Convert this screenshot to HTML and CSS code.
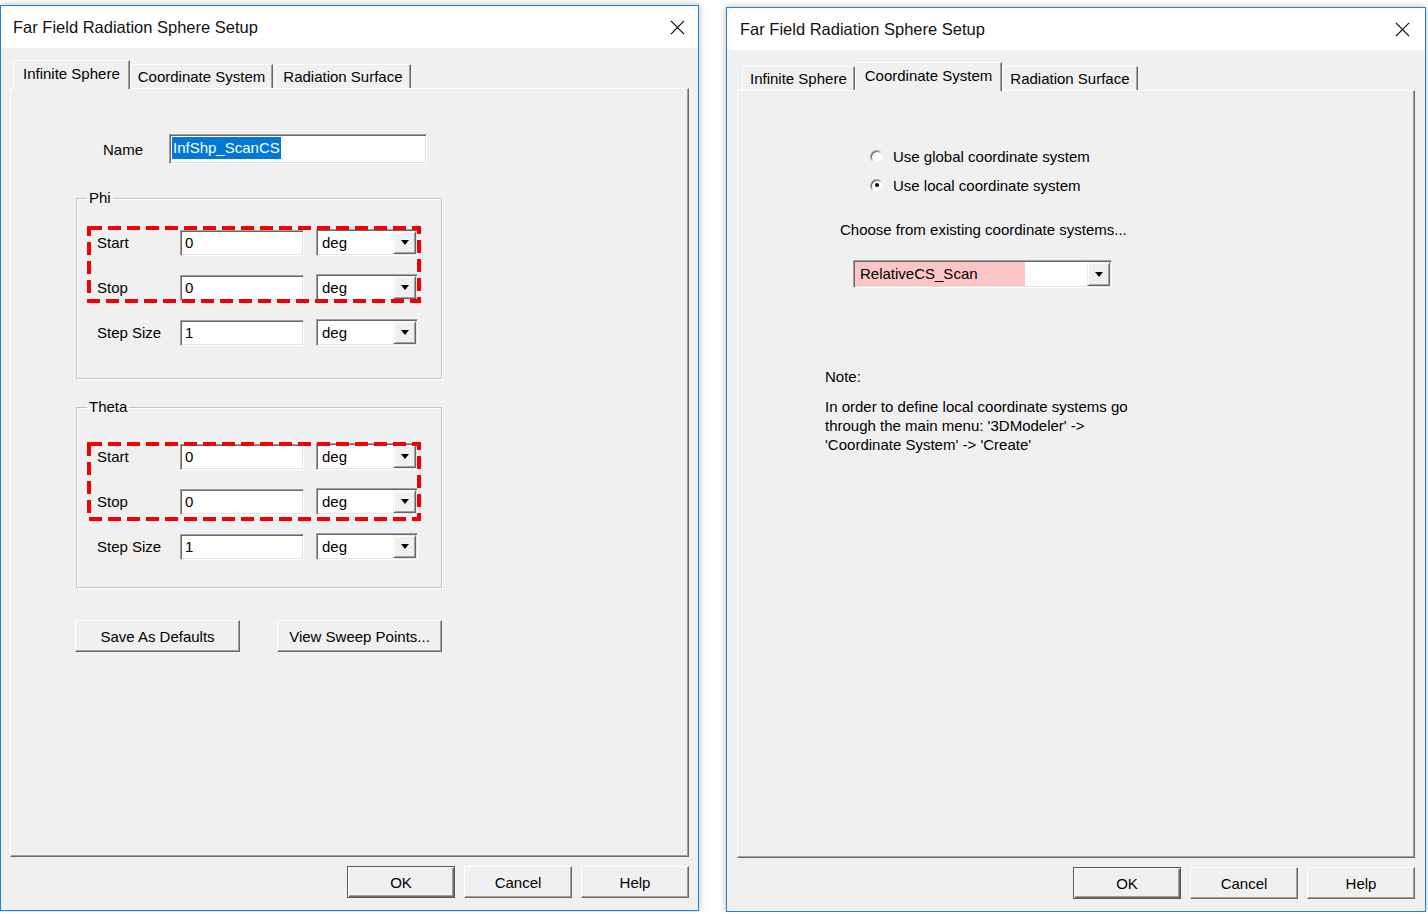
FILE: index.html
```html
<!DOCTYPE html>
<html lang="en">
<head>
  <meta charset="UTF-8">
  <title>Far Field Radiation Sphere Setup</title>
  <link rel="stylesheet" href="styles.css">
</head>
<body>

  <!-- left: infinite sphere tab -->
  <div class="dialog">
    <div class="titlebar">
      <span class="title">Far Field Radiation Sphere Setup</span>
      <svg class="close" viewBox="0 0 16 16"><path d="M1 1L15 15M15 1L1 15" stroke="#000" stroke-width="1.2" fill="none"/></svg>
    </div>
    <div class="dlg-body">
      <div class="tabs">
        <div class="tab active">Infinite Sphere</div>
        <div class="tab">Coordinate System</div>
        <div class="tab">Radiation Surface</div>
      </div>
      <div class="panel panel-sphere">
        <div class="name-row">
          <span class="name-lbl">Name</span>
          <div class="field name-field"><span class="sel">InfShp_ScanCS</span></div>
        </div>

        <fieldset class="group group-phi">
          <legend>Phi</legend>
          <div class="rows">
            <svg class="mark" width="334" height="77"><rect x="2" y="2" width="330" height="73" fill="none" stroke="#f40000" stroke-width="4" stroke-dasharray="13 6"/></svg>
            <div class="row">
              <span>Start</span>
              <div class="field">0</div>
              <div class="combo"><span class="combo-text">deg</span><span class="drop"></span></div>
            </div>
            <div class="row">
              <span>Stop</span>
              <div class="field">0</div>
              <div class="combo"><span class="combo-text">deg</span><span class="drop"></span></div>
            </div>
            <div class="row">
              <span>Step Size</span>
              <div class="field">1</div>
              <div class="combo"><span class="combo-text">deg</span><span class="drop"></span></div>
            </div>
          </div>
        </fieldset>

        <fieldset class="group group-theta">
          <legend>Theta</legend>
          <div class="rows">
            <svg class="mark mark-theta" width="334" height="79"><rect x="2" y="2" width="330" height="75" fill="none" stroke="#f40000" stroke-width="4" stroke-dasharray="13 6"/></svg>
            <div class="row">
              <span>Start</span>
              <div class="field">0</div>
              <div class="combo"><span class="combo-text">deg</span><span class="drop"></span></div>
            </div>
            <div class="row">
              <span>Stop</span>
              <div class="field">0</div>
              <div class="combo"><span class="combo-text">deg</span><span class="drop"></span></div>
            </div>
            <div class="row">
              <span>Step Size</span>
              <div class="field">1</div>
              <div class="combo"><span class="combo-text">deg</span><span class="drop"></span></div>
            </div>
          </div>
        </fieldset>

        <div class="extra-btns">
          <button class="btn wide">Save As Defaults</button>
          <button class="btn wide">View Sweep Points...</button>
        </div>
      </div>
      <div class="footer-btns">
        <button class="btn default">OK</button>
        <button class="btn">Cancel</button>
        <button class="btn">Help</button>
      </div>
    </div>
  </div>

  <!-- right: coordinate system tab -->
  <div class="dialog">
    <div class="titlebar">
      <span class="title">Far Field Radiation Sphere Setup</span>
      <svg class="close" viewBox="0 0 16 16"><path d="M1 1L15 15M15 1L1 15" stroke="#000" stroke-width="1.2" fill="none"/></svg>
    </div>
    <div class="dlg-body">
      <div class="tabs">
        <div class="tab">Infinite Sphere</div>
        <div class="tab active">Coordinate System</div>
        <div class="tab">Radiation Surface</div>
      </div>
      <div class="panel panel-cs">
        <div class="radio-row"><span class="radio"></span>Use global coordinate system</div>
        <div class="radio-row"><span class="radio checked"></span>Use local coordinate system</div>
        <div class="choose">Choose from existing coordinate systems...</div>
        <div class="combo cs-combo"><span class="combo-text"><span class="hl">RelativeCS_Scan</span></span><span class="drop"></span></div>
        <div class="note">Note:</div>
        <p class="note-text">In order to define local coordinate systems go<br>through the main menu: '3DModeler' -&gt;<br>'Coordinate System' -&gt; 'Create'</p>
      </div>
      <div class="footer-btns">
        <button class="btn default">OK</button>
        <button class="btn">Cancel</button>
        <button class="btn">Help</button>
      </div>
    </div>
  </div>

</body>
</html>
```

FILE: styles.css
```css
body {
  margin: 0;
  padding-top: 5px;
  background: #fff;
  font-family: "Liberation Sans", Arial, sans-serif;
  font-size: 15px;
  color: #000;
  display: flex;
  align-items: flex-start;
}
.dialog {
  width: 699px;
  height: 906px;
  box-sizing: border-box;
  border: 1px solid #1883d7;
  background: #f0f0f0;
  box-shadow: 0 0 7px rgba(0,0,0,0.28);
  display: flex;
  flex-direction: column;
}
.dialog + .dialog {
  width: 700px;
  height: 905px;
  margin-left: 27px;
  margin-top: 2px;
}
.titlebar {
  height: 42px;
  flex-shrink: 0;
  background: #fff;
  display: flex;
  align-items: center;
  justify-content: space-between;
  padding: 0 13px 0 12px;
}
.dialog + .dialog .titlebar {
  padding: 0 15px 0 13px;
}
.title {
  font-size: 16.5px;
  color: #111;
}
.close {
  width: 15px;
  height: 15px;
}
.dlg-body {
  flex: 1;
  min-height: 0;
  display: flex;
  flex-direction: column;
  padding: 12px 9px 12px 9px;
}
.dialog + .dialog .dlg-body {
  padding: 12px 10px 12px 10px;
}

/* tabs */
.tabs {
  display: flex;
  align-items: flex-end;
  height: 28px;
  padding-left: 5px;
  flex-shrink: 0;
}
.tab {
  height: 24px;
  box-sizing: border-box;
  line-height: 23px;
  padding: 0 7px;
  border: 1px solid;
  border-bottom: 0;
  border-color: #fff #696969 transparent #fff;
  box-shadow: inset -1px 0 0 #a0a0a0;
  margin-right: 2px;
  white-space: nowrap;
}
.tab.active {
  height: 29px;
  line-height: 26px;
  padding: 0 9px;
  margin: 0 0 -1px -2px;
  background: #f0f0f0;
  position: relative;
  z-index: 1;
}
.panel {
  flex: 1;
  min-height: 0;
  border: 1px solid;
  border-color: #fff #696969 #696969 #fff;
  box-shadow: inset -1px -1px 0 #a0a0a0;
}

/* sunken controls */
.field {
  height: 26px;
  box-sizing: border-box;
  background: #fff;
  border: 1px solid;
  border-color: #a0a0a0 #fff #fff #a0a0a0;
  box-shadow: inset 1px 1px 0 #696969, inset -1px -1px 0 #e3e3e3;
  padding-left: 4px;
  line-height: 24px;
}
.combo {
  height: 27px;
  box-sizing: border-box;
  display: flex;
  background: #fff;
  border: 1px solid;
  border-color: #a0a0a0 #fff #fff #a0a0a0;
  box-shadow: inset 1px 1px 0 #696969, inset -1px -1px 0 #e3e3e3;
  padding: 1px;
}
.combo-text {
  flex: 1;
  padding-left: 4px;
  line-height: 24px;
}
.drop {
  width: 23px;
  box-sizing: border-box;
  background: #f0f0f0;
  border: 1px solid;
  border-color: #f0f0f0 #696969 #696969 #f0f0f0;
  box-shadow: inset 1px 1px 0 #fff, inset -1px -1px 0 #a0a0a0;
  display: flex;
  align-items: center;
  justify-content: center;
}
.drop::before {
  content: "";
  border-left: 4.5px solid transparent;
  border-right: 4.5px solid transparent;
  border-top: 5px solid #000;
}

/* infinite sphere tab */
.panel-sphere {
  padding-left: 65px;
}
.name-row {
  display: flex;
  align-items: center;
  margin-top: 45px;
  padding-left: 27px;
}
.name-lbl {
  width: 66px;
}
.name-field {
  width: 258px;
  height: 30px;
  padding: 2px 0 0 2px;
  line-height: 22px;
}
.sel {
  display: inline-block;
  background: #0078d7;
  color: #fff;
  padding: 0 1px;
}
.group {
  width: 366px;
  box-sizing: border-box;
  margin: 25px 0 0;
  padding: 22px 0 32px 20px;
  border: 1px solid #c4c4c4;
  box-shadow: inset 1px 1px 0 #fff, 1px 1px 0 #fff;
  min-width: 0;
}
.group legend {
  margin-left: -10px;
  padding: 0 2px;
  line-height: 18px;
}
.group-theta {
  margin-top: 19px;
  padding: 27px 0 27px 20px;
}
.rows {
  position: relative;
  display: flex;
  flex-direction: column;
  gap: 18px;
}
.row {
  display: grid;
  grid-template-columns: 83px 136px 102px;
  align-items: center;
  height: 27px;
}
.row .field {
  width: 124px;
}
.mark {
  position: absolute;
  left: -10px;
  top: -3px;
  z-index: 2;
}
.mark-theta {
  top: -1px;
}
.extra-btns {
  display: flex;
  gap: 37px;
  margin: 32px 0 0 -1px;
}

/* buttons */
.btn {
  width: 108px;
  height: 32px;
  box-sizing: border-box;
  font-family: inherit;
  font-size: 15px;
  color: #000;
  background: #f0f0f0;
  border: 1px solid;
  border-color: #fff #696969 #696969 #fff;
  box-shadow: inset -1px -1px 0 #a0a0a0;
  padding: 0;
}
.btn.wide {
  width: 165px;
}
.btn.default {
  border-color: #5a5a5a;
  box-shadow: inset 1px 1px 0 #fff, inset -1px -1px 0 #696969, inset -2px -2px 0 #a0a0a0;
}
.footer-btns {
  display: flex;
  justify-content: flex-end;
  gap: 9px;
  margin-top: 9px;
  flex-shrink: 0;
}

/* coordinate system tab */
.panel-cs {
  padding-top: 56px;
}
.radio-row {
  display: flex;
  align-items: center;
  height: 18px;
  margin-left: 132px;
  margin-bottom: 11px;
}
.radio {
  width: 13px;
  height: 13px;
  box-sizing: border-box;
  border-radius: 50%;
  background: #fff;
  border: 1px solid;
  border-color: #a0a0a0 #f0f0f0 #f0f0f0 #a0a0a0;
  box-shadow: inset 1px 1px 0 #696969;
  margin-right: 10px;
  display: flex;
  align-items: center;
  justify-content: center;
}
.radio.checked::after {
  content: "";
  width: 4px;
  height: 4px;
  border-radius: 50%;
  background: #000;
}
.choose {
  margin: 27px 0 0 102px;
  line-height: 18px;
}
.cs-combo {
  width: 259px;
  height: 28px;
  margin: 21px 0 0 115px;
}
.cs-combo .combo-text {
  padding-left: 0;
}
.hl {
  display: inline-block;
  width: 165px;
  padding-left: 5px;
  background: #fcc6c6;
  line-height: 24px;
}
.note {
  margin: 80px 0 0 87px;
  line-height: 18px;
}
.note-text {
  margin: 11px 0 0 87px;
  line-height: 19px;
}
```
